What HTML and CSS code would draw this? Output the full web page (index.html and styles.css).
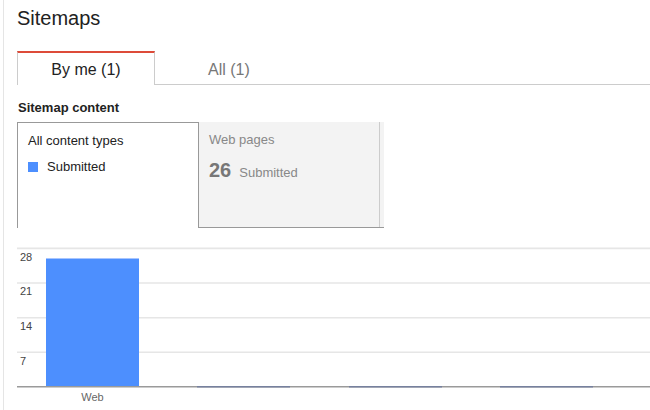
FILE: index.html
```html
<!DOCTYPE html>
<html lang="en">
<head>
<meta charset="utf-8">
<title>Sitemaps</title>
<link rel="stylesheet" href="styles.css">
</head>
<body>
<div class="page">
  <h1 class="title">Sitemaps</h1>
  <div class="tabs">
    <div class="tab tab-active">By me (1)</div>
    <div class="tab tab-other">All (1)</div>
  </div>
  <h2 class="section">Sitemap content</h2>
  <div class="cards">
    <div class="card card-all">
      <div class="card-title">All content types</div>
      <div class="legend"><span class="swatch"></span>Submitted</div>
    </div>
    <div class="card-wrap">
      <div class="card card-web">
        <div class="card-title muted">Web pages</div>
        <div class="stat"><span class="num">26</span><span class="lbl">Submitted</span></div>
      </div>
      <div class="card-edge"></div>
    </div>
  </div>
  <svg class="chart" width="633" height="172" viewBox="0 0 633 172">
    <g stroke="#e6e6e6" stroke-width="1.6">
      <line x1="0" y1="12.4" x2="633" y2="12.4"/>
      <line x1="0" y1="47" x2="633" y2="47"/>
      <line x1="0" y1="81.7" x2="633" y2="81.7"/>
      <line x1="0" y1="116.3" x2="633" y2="116.3"/>
    </g>
    <g class="ylabels">
      <text x="3" y="24.5">28</text>
      <text x="3" y="59.2">21</text>
      <text x="3" y="93.8">14</text>
      <text x="3" y="128.5">7</text>
    </g>
    <rect x="29" y="22" width="93" height="128.8" fill="#4d8ffe"/>
    <rect x="29" y="22" width="93" height="1" fill="#a7c5ff"/>
    <line x1="0" y1="150.8" x2="633" y2="150.8" stroke="#9a9a9a" stroke-width="1.5"/>
    <g stroke="#76809e" stroke-width="1.5">
      <line x1="180" y1="150.8" x2="273" y2="150.8"/>
      <line x1="332" y1="150.8" x2="425" y2="150.8"/>
      <line x1="483" y1="150.8" x2="576" y2="150.8"/>
    </g>
    <text class="xlabel" x="75.5" y="165" text-anchor="middle">Web</text>
  </svg>
</div>
</body>
</html>
```
FILE: styles.css
```css
* { box-sizing: border-box; }
html, body { margin: 0; padding: 0; background: #fff; }
body {
  font-family: "Liberation Sans", Arial, sans-serif;
  color: #222;
  width: 650px;
  height: 410px;
  overflow: hidden;
}
.page {
  margin-left: 3px;
  border-left: 1px solid #e5e5e5;
  padding-left: 13px;
  padding-top: 7px;
  min-height: 410px;
}
.title {
  margin: 0;
  font-size: 20px;
  font-weight: normal;
  line-height: 23px;
  color: #222;
}
.tabs {
  display: flex;
  margin-top: 21px;
  border-bottom: 1px solid #ccc;
}
.tab {
  font-size: 16px;
  line-height: 32px;
  height: 34px;
  margin-bottom: -1px;
}
.tab-active {
  width: 138px;
  text-align: center;
  background: #fff;
  border-top: 2px solid #dd4b39;
  border-left: 1px solid #ccc;
  border-right: 1px solid #ccc;
  color: #222;
  padding-top: 1px;
}
.tab-other {
  padding-left: 53px;
  padding-top: 3px;
  color: #777;
}
.section {
  margin: 15px 0 6px 1px;
  font-size: 13px;
  font-weight: bold;
  line-height: 16px;
  color: #222;
}
.cards {
  display: flex;
  height: 106px;
}
.card-all {
  width: 182px;
  border: 1px solid #999;
  border-bottom: none;
  padding: 10px 0 0 10px;
}
.card-title {
  font-size: 13px;
  line-height: 15px;
  color: #222;
}
.muted { color: #888; }
.legend {
  display: flex;
  align-items: center;
  margin-top: 11px;
  font-size: 13px;
  line-height: 15px;
  color: #222;
}
.swatch {
  width: 10px;
  height: 10px;
  background: #4d8ffe;
  margin-right: 9px;
}
.card-wrap {
  display: flex;
  background: #f3f3f3;
  border-bottom: 1px solid #999;
}
.card-web {
  width: 181px;
  border-right: 1px solid #ccc;
  padding: 10px 0 0 10px;
}
.card-edge { width: 4px; }
.stat {
  display: flex;
  align-items: baseline;
  margin-top: 12px;
}
.num {
  font-size: 20px;
  font-weight: bold;
  color: #777;
  line-height: 23px;
}
.lbl {
  font-size: 13px;
  color: #888;
  margin-left: 8px;
}
.chart {
  display: block;
  margin-top: 8px;
}
.ylabels text {
  font-family: "Liberation Sans", Arial, sans-serif;
  font-size: 11px;
  fill: #444;
}
.xlabel {
  font-family: "Liberation Sans", Arial, sans-serif;
  font-size: 11px;
  fill: #666;
}
```
